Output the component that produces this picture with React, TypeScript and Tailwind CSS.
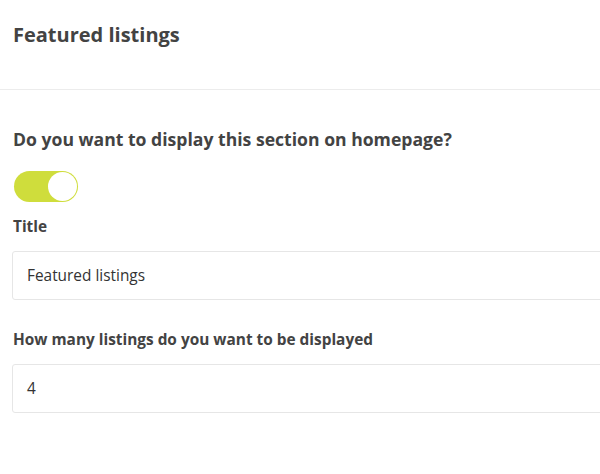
export default function App() {
  return (
    <div
      className="w-[600px] h-[474px] overflow-hidden bg-white text-[#434343]"
      style={{ fontFamily: '"Open Sans", "Liberation Sans", sans-serif' }}
    >
      {/* Header */}
      <div className="h-[90px] border-b border-[#ececec] pl-[13px] pt-[22px]">
        <h1 className="text-[20px] font-bold leading-[26px]">Featured listings</h1>
      </div>

      <div className="pl-[12px] pt-[37px]">
        <h2 className="text-[17.6px] font-bold leading-[24px] pl-px">
          Do you want to display this section on homepage?
        </h2>

        {/* Toggle */}
        <div className="mt-[20px] ml-[2px] flex h-[31px] w-[64px] items-center justify-end rounded-full bg-[#cfdd3c] p-px">
          <div className="h-[29px] w-[29px] rounded-full bg-white" />
        </div>

        <label className="mt-[14px] block pl-px text-[15.4px] font-bold leading-[22px]">Title</label>
        <div className="mt-[13px] flex h-[49px] w-[620px] items-center rounded-[3px] border border-[#e6e6e6] pl-[14px] text-[15.4px] text-[#333]">
          Featured listings
        </div>

        <label className="mt-[29px] block pl-px text-[15.4px] font-bold leading-[22px]">
          How many listings do you want to be displayed
        </label>
        <div className="mt-[13px] flex h-[49px] w-[620px] items-center rounded-[3px] border border-[#e6e6e6] pl-[14px] text-[15.4px] text-[#333]">
          4
        </div>
      </div>
    </div>
  );
}
